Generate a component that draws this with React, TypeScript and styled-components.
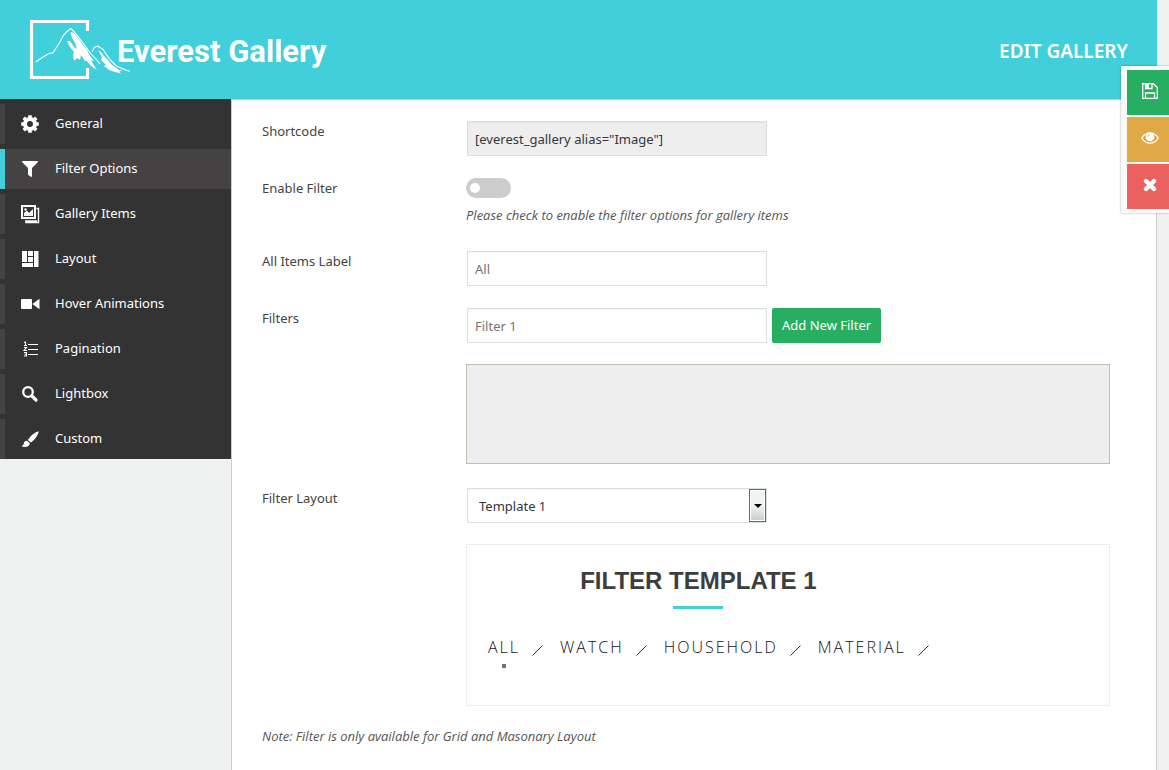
import React from "react";
import styled, { createGlobalStyle, css } from "styled-components";
import { FaFilter } from "react-icons/fa";

const GlobalStyle = createGlobalStyle`
  *, *::before, *::after { box-sizing: border-box; }
  body {
    margin: 0;
    background: #f0f1f1;
    color: #444;
    font: 13px/20px "Noto Sans", sans-serif;
  }
  button, input, select { font: inherit; color: inherit; }
`;

const Page = styled.div`
  display: flex;
  flex-direction: column;
  min-height: 100vh;
  margin-right: 12px;
`;

const Header = styled.header`
  display: flex;
  align-items: center;
  justify-content: space-between;
  height: 99px;
  padding: 0 29px;
  background: #41cfdc;
  color: #fff;
`;

const Brand = styled.div`
  display: flex;
  align-items: center;
`;

const BrandName = styled.span`
  margin-left: -14px;
  padding-top: 4px;
  font: 700 31px/40px Roboto, sans-serif;
`;

const PageTitle = styled.h1`
  margin: 0;
  padding-top: 2px;
  font-size: 19px;
  line-height: 26px;
  font-weight: 600;
`;

const Body = styled.div`
  display: flex;
  flex: 1;
  align-items: stretch;
`;

const Sidebar = styled.nav`
  flex: 0 0 231px;
`;

const Menu = styled.ul`
  display: flex;
  flex-direction: column;
  gap: 5px;
  margin: 0;
  padding: 5px 0 0;
  list-style: none;
  background: #333;
`;

const MenuLink = styled.a<{ $active?: boolean }>`
  display: flex;
  align-items: center;
  gap: 15px;
  height: 40px;
  padding-left: 15px;
  border-left: 5px solid ${(p) => (p.$active ? "#41cfdc" : "#444243")};
  background: ${(p) => (p.$active ? "#444243" : "transparent")};
  color: #fff;
  text-decoration: none;

  span { padding-bottom: 2px; }
`;

const IconSlot = styled.i`
  display: flex;
  align-items: center;
  justify-content: center;
  width: 20px;
  height: 20px;

  svg { flex: none; }
`;

const Panel = styled.main`
  flex: 1;
  min-width: 0;
  padding: 20px 46px 20px 30px;
  background: #fff;
  border: solid #ccc;
  border-width: 1px 1px 0;
`;

const Field = styled.div`
  display: grid;
  grid-template-columns: 204px 1fr;
  margin-bottom: 20px;
`;

const FieldLabel = styled.label`
  line-height: 22px;
`;

const Controls = styled.div`
  display: flex;
  flex-wrap: wrap;
  gap: 5px;
  padding: 1px;
`;

const boxed = css`
  width: 300px;
  height: 35px;
  margin: 0;
  padding: 0 7px;
  border: 1px solid #d8e0e0;
  border-radius: 0;
  background: #fff;
  box-shadow: inset 0 1px 2px rgba(0, 0, 0, 0.05);
`;

const TextInput = styled.input`
  ${boxed}
  &::placeholder { color: #757575; opacity: 1; }
  &:read-only { background: #eee; color: #32373c; }
`;

const SwitchCell = styled.div`
  padding: 1px 0 5px;
`;

const Switch = styled.input`
  display: flex;
  align-items: center;
  appearance: none;
  width: 45px;
  height: 20px;
  margin: 0 0 7px;
  padding: 0 4px;
  border-radius: 10px;
  background: #ccc;
  cursor: pointer;

  &::before {
    content: "";
    width: 10px;
    height: 10px;
    border-radius: 50%;
    background: #fff;
  }
  &:checked { justify-content: flex-end; background: #41cfdc; }
`;

const Hint = styled.p`
  margin: 0;
  color: #555;
  font-family: "Open Sans", sans-serif;
  font-style: italic;
`;

const AddButton = styled.button`
  height: 35px;
  padding: 0 10px 2px;
  border: 0;
  border-radius: 2px;
  background: #27ae60;
  color: #fff;
`;

const FilterList = styled.div`
  height: 100px;
  margin: 0 0 23px 204px;
  border: 1px solid #c3bdb3;
  background: #eee;
`;

const SelectWrap = styled.div`
  position: relative;
  display: flex;
`;

const Select = styled.select`
  ${boxed}
  appearance: none;
  padding: 0 11px;
  color: #32373c;
`;

const SelectArrow = styled.span`
  position: absolute;
  top: 1px;
  right: 1px;
  bottom: 1px;
  display: flex;
  align-items: center;
  justify-content: center;
  width: 17px;
  border: 1px solid #6d666d;
  box-shadow: inset 0 0 0 1px #fff;
  background: linear-gradient(#f1f3f3 50%, #c9cccc);
  pointer-events: none;
`;

const Preview = styled.section`
  height: 162px;
  margin: 0 0 20px 204px;
  border: 1px solid #ececec;
`;

const PreviewInner = styled.div`
  display: flex;
  flex-direction: column;
  align-items: center;
  width: fit-content;
  padding: 20px 0 0 21px;
`;

const PreviewTitle = styled.h2`
  display: flex;
  flex-direction: column;
  align-items: center;
  gap: 9px;
  margin: 0 20px 26px 0;
  color: #3d3d3d;
  font: 700 24px/32px "Liberation Sans", Arial, sans-serif;

  &::after {
    content: "";
    width: 50px;
    height: 3px;
    background: #41cfdc;
  }
`;

const Tabs = styled.div`
  display: flex;
  gap: 17px;
`;

const Tab = styled.button<{ $active?: boolean }>`
  position: relative;
  display: flex;
  align-items: center;
  gap: 12px;
  padding: 0;
  border: 0;
  background: none;
  color: #111;
  font: 300 16px/24px "Open Sans", sans-serif;
  letter-spacing: 2px;

  svg { margin-top: 6px; }

  ${(p) =>
    p.$active &&
    css`
      &::before {
        content: "";
        position: absolute;
        top: 29px;
        left: 14px;
        width: 4px;
        height: 4px;
        background: #7a6a80;
      }
    `}
`;

const ActionBar = styled.aside`
  position: fixed;
  top: 66px;
  right: 0;
  display: flex;
  flex-direction: column;
  gap: 2px;
  padding: 4px 0 4px 6px;
  background: #f8f9f9;
  box-shadow: 0 0 2px rgba(0, 0, 0, 0.35);
`;

const ActionButton = styled.button<{ $color: string }>`
  display: flex;
  align-items: center;
  justify-content: center;
  width: 42px;
  height: 45px;
  padding: 0 0 4px 3px;
  border: 0;
  background: ${(p) => p.$color};
  color: #fff;
`;

const Logo = () => (
  <svg width="102" height="62" viewBox="29 19 102 62" fill="none" stroke="#fff" aria-hidden="true">
    <path d="M87.500 31V21.500H31.500V77.500H87.500V68" strokeWidth="3.200" />
    <path
      d="M36 62L40 59L44.700 56L48 54L53 52.700L57.300 46L60 42L63 36L67 31.500L70.700 28.500L74 31.500L78 36.700L86.300 47.700L91 54L96 59L100 64"
      strokeWidth="1.100"
    />
    <path
      d="M92 52L94 48L97.300 46L103 49.300L106 54L109.700 59.300L116.300 66L122 68.500L129.700 71.500"
      strokeWidth="1.100"
    />
    <path
      fill="#fff"
      stroke="none"
      d="M70.500 32L74 33L78 38L82 44L87 50L90 56L94 61L91 60L93 64L97 70L91 66L87 61L85 61L81 55L80 60L77 58L74 61L73 55L74 52L70 47L67 41L70 41L74 47L77 49L75 43L72 38Z"
    />
    <path
      fill="#fff"
      stroke="none"
      d="M98 50L101 52L104 56L107 59L112 65L119 70L122 70L119 72L122 74L115 72L109 70L104 66L106 65L101 60L102 57Z"
    />
  </svg>
);

const GearIcon = () => (
  <svg width="20" height="20" viewBox="0 0 20 20" fill="none" stroke="#fff" aria-hidden="true">
    <circle cx="10" cy="10" r="5" strokeWidth="4" />
    {[0, 45, 90, 135].map((angle) => (
      <path
        key={angle}
        d="M10 1.200V4.500M10 15.500V18.800"
        strokeWidth="3.600"
        transform={`rotate(${angle} 10 10)`}
      />
    ))}
  </svg>
);

const SearchIcon = () => (
  <svg width="20" height="20" viewBox="0 0 20 20" fill="none" stroke="#fff" aria-hidden="true">
    <circle cx="8" cy="8" r="4.800" strokeWidth="2.300" />
    <path d="M11.800 11.800L16 16" strokeWidth="3.300" strokeLinecap="round" />
  </svg>
);

const BrushIcon = () => (
  <svg width="20" height="20" viewBox="0 0 20 20" fill="#fff" aria-hidden="true">
    <path d="M18.800 2.200C15 3 10.500 6.500 7.800 11L10.800 13.500C14.500 11 18 6.500 18.800 2.200Z" />
    <path d="M7 11.800C4.500 11.800 4 13.500 3.800 14.800C3.500 16 2.500 16.800 1.200 17C4 18.500 9.500 18.500 9.800 14.300Z" />
  </svg>
);

const GalleryIcon = () => (
  <svg width="20" height="20" viewBox="0 0 20 20" fill="none" stroke="#fff" aria-hidden="true">
    <rect x="2" y="2" width="13" height="12" strokeWidth="2" />
    <path d="M16.500 4.500H18.500V18.500H6V16.500M17 17H5" strokeWidth="1.400" />
    <path fill="#fff" stroke="none" d="M4 12V9L7 6.500L9 9L13 5V12Z" />
    <circle cx="5.500" cy="5.500" r="1.200" fill="#fff" stroke="none" />
  </svg>
);

const LayoutIcon = () => (
  <svg width="20" height="20" viewBox="0 0 20 20" fill="#fff" aria-hidden="true">
    <path d="M2 2H7V13H2ZM8 2H13V7H8ZM8 8H13V13H8ZM2 14H13V18H2ZM14 2H18.500V18H14Z" />
  </svg>
);

const VideoIcon = () => (
  <svg width="20" height="20" viewBox="0 0 20 20" fill="#fff" aria-hidden="true">
    <rect x="1" y="5" width="11" height="10" rx="1" />
    <path d="M12.500 10L19.500 4.800V15.200Z" />
  </svg>
);

const NumberedIcon = () => (
  <svg width="20" height="20" viewBox="0 0 20 20" fill="none" stroke="#fff" aria-hidden="true">
    <path d="M8 5.500H18M8 10.500H18M8 15.500H18" />
    <path
      d="M4 3.500L5.500 3V6.500M4 6.500H7M4 8.500H6.500L4 11.500H7M4 13.500H6.500V17H4M4.500 15.200H6.500"
      strokeWidth="1.100"
    />
  </svg>
);

const SaveIcon = () => (
  <svg width="16" height="16" viewBox="0 0 16 16" fill="none" stroke="#fff" strokeWidth="1.300" aria-hidden="true">
    <path d="M.7.700H11.500L15.300 4.500V15.300H.7Z" />
    <path d="M3.500 15V10H12.500V15" />
    <path d="M3.500 1V5.500H10V1" />
    <path d="M3.500 1H7V5.500H3.500Z" fill="#fff" stroke="none" />
  </svg>
);

const EyeIcon = () => (
  <svg width="18" height="12" viewBox="0 0 18 12" fill="none" stroke="#fff" aria-hidden="true">
    <path d="M.8 6C3 2.500 6 .8 9 .8S15 2.500 17.200 6C15 9.500 12 11.200 9 11.200S3 9.500.8 6Z" strokeWidth="1.300" />
    <circle cx="9" cy="5" r="4.300" fill="#fff" stroke="none" />
    <path d="M6.600 5A2.400 2.400 0 0 1 9 2.600" stroke="#dfaa45" strokeWidth=".7" />
  </svg>
);

const CloseIcon = () => (
  <svg width="14" height="14" viewBox="0 0 14 14" stroke="#fff" strokeWidth="4.400" strokeLinecap="round" aria-hidden="true">
    <path d="M3 3L11 11M11 3L3 11" />
  </svg>
);

const Slash = () => (
  <svg width="11" height="11" viewBox="0 0 11 11" stroke="#333" aria-hidden="true">
    <path d="M.5 10.500L10.500 .5" />
  </svg>
);

const menu = [
  { label: "General", icon: <GearIcon /> },
  { label: "Filter Options", icon: <FaFilter size={16} />, active: true },
  { label: "Gallery Items", icon: <GalleryIcon /> },
  { label: "Layout", icon: <LayoutIcon /> },
  { label: "Hover Animations", icon: <VideoIcon /> },
  { label: "Pagination", icon: <NumberedIcon /> },
  { label: "Lightbox", icon: <SearchIcon /> },
  { label: "Custom", icon: <BrushIcon /> },
];

const filters = ["ALL", "WATCH", "HOUSEHOLD", "MATERIAL"];

export default function App() {
  return (
    <>
      <GlobalStyle />
      <Page>
        <Header>
          <Brand>
            <Logo />
            <BrandName>Everest Gallery</BrandName>
          </Brand>
          <PageTitle>EDIT GALLERY</PageTitle>
        </Header>
        <Body>
          <Sidebar>
            <Menu>
              {menu.map((item) => (
                <li key={item.label}>
                  <MenuLink href="#" $active={item.active}>
                    <IconSlot>{item.icon}</IconSlot>
                    <span>{item.label}</span>
                  </MenuLink>
                </li>
              ))}
            </Menu>
          </Sidebar>
          <Panel>
            <Field>
              <FieldLabel htmlFor="shortcode">Shortcode</FieldLabel>
              <Controls>
                <TextInput id="shortcode" readOnly value={'[everest_gallery alias="Image"]'} />
              </Controls>
            </Field>
            <Field>
              <FieldLabel htmlFor="enable">Enable Filter</FieldLabel>
              <SwitchCell>
                <Switch id="enable" type="checkbox" />
                <Hint>Please check to enable the filter options for gallery items</Hint>
              </SwitchCell>
            </Field>
            <Field>
              <FieldLabel htmlFor="all-label">All Items Label</FieldLabel>
              <Controls>
                <TextInput id="all-label" placeholder="All" />
              </Controls>
            </Field>
            <Field>
              <FieldLabel htmlFor="filter-name">Filters</FieldLabel>
              <Controls>
                <TextInput id="filter-name" placeholder="Filter 1" />
                <AddButton type="button">Add New Filter</AddButton>
              </Controls>
            </Field>
            <FilterList />
            <Field>
              <FieldLabel htmlFor="layout">Filter Layout</FieldLabel>
              <Controls>
                <SelectWrap>
                  <Select id="layout" defaultValue="1">
                    <option value="1">Template 1</option>
                  </Select>
                  <SelectArrow>
                    <svg width="8" height="4" viewBox="0 0 8 4" aria-hidden="true">
                      <path d="M0 0H8L4 4Z" />
                    </svg>
                  </SelectArrow>
                </SelectWrap>
              </Controls>
            </Field>
            <Preview>
              <PreviewInner>
                <PreviewTitle>FILTER TEMPLATE 1</PreviewTitle>
                <Tabs>
                  {filters.map((name, i) => (
                    <Tab key={name} type="button" $active={i === 0}>
                      {name}
                      <Slash />
                    </Tab>
                  ))}
                </Tabs>
              </PreviewInner>
            </Preview>
            <Hint>Note: Filter is only available for Grid and Masonary Layout</Hint>
          </Panel>
        </Body>
      </Page>
      <ActionBar>
        <ActionButton type="button" $color="#27ae60" aria-label="Save">
          <SaveIcon />
        </ActionButton>
        <ActionButton type="button" $color="#dfaa45" aria-label="Preview">
          <EyeIcon />
        </ActionButton>
        <ActionButton type="button" $color="#ea6160" aria-label="Close">
          <CloseIcon />
        </ActionButton>
      </ActionBar>
    </>
  );
}
